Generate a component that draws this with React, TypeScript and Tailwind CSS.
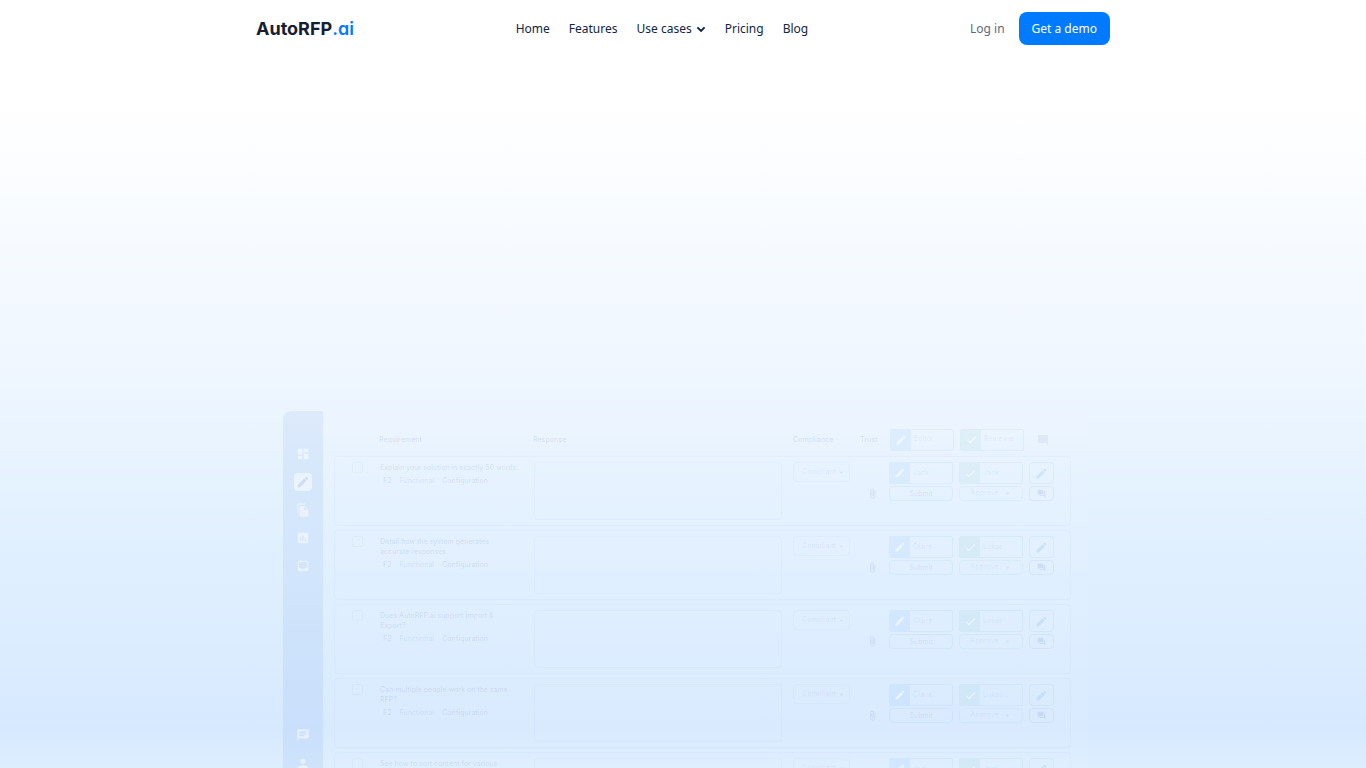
import React from "react";
import {
  MdDashboard,
  MdEdit,
  MdFileCopy,
  MdInsertChart,
  MdInbox,
  MdChat,
  MdPerson,
  MdCheck,
  MdModeComment,
  MdQuestionAnswer,
  MdAttachFile,
  MdArrowDropDown,
} from "react-icons/md";

const columns =
  "grid grid-cols-[28px_154px_minmax(0,1fr)_67px_28px_70px_70px_25px] pl-[17px] pr-4";

const rows = [
  { lines: ["Explain your solution in exactly 50 words."], editor: "Jack", reviewer: "Jack" },
  { lines: ["Detail how the system generates", "accurate responses."], editor: "Claire", reviewer: "Lukas" },
  { lines: ["Does AutoRFP.ai support Import &", "Export?"], editor: "Claire", reviewer: "Lukas" },
  { lines: ["Can multiple people work on the same", "RFP?"], editor: "Claire", reviewer: "Lukas" },
  { lines: ["See how to sort content for various"], editor: "Jack", reviewer: "Jack" },
];

function Header() {
  const link = "hover:text-[#007bff]";
  return (
    <header className="px-4">
      <div className="mx-auto flex h-[57px] w-full max-w-[854px] items-center justify-between">
        <a
          href="#"
          className="font-[Inter,sans-serif] text-[18px] leading-6 font-bold text-[#14202e]"
        >
          AutoRFP
          <span className="font-semibold text-[#007bff] [font-feature-settings:'cv11']">.ai</span>
        </a>
        <nav className="flex items-center gap-[19px] text-[12px] text-[#0f2644]">
          <a href="#" className={link}>Home</a>
          <a href="#" className={link}>Features</a>
          <button type="button" className="flex items-center gap-1">
            Use cases
            <svg viewBox="0 0 10 10" className="size-[10px]" fill="none" stroke="currentColor" strokeWidth="2">
              <path d="M1.4 3.4 5 6.9l3.6-3.5" />
            </svg>
          </button>
          <a href="#" className={link}>Pricing</a>
          <a href="#" className={link}>Blog</a>
        </nav>
        <div className="flex items-center gap-[14px] text-[12px]">
          <a href="#" className="text-[#5d6b82]">Log in</a>
          <a
            href="#"
            className="flex h-[33px] items-center rounded-lg bg-[#007bff] px-[13px] text-white"
          >
            Get a demo
          </a>
        </div>
      </div>
    </header>
  );
}

function Sidebar() {
  return (
    <aside className="flex w-10 shrink-0 flex-col items-center rounded-l-lg bg-[#1d5fc0]/7 pt-[34px] text-white/50">
      <div className="flex flex-col items-center gap-[10px]">
        <button type="button" aria-label="Dashboard" className="flex size-[18px] items-center justify-center">
          <MdDashboard size={14} />
        </button>
        <button
          type="button"
          aria-label="Projects"
          className="flex size-[18px] items-center justify-center rounded-sm bg-white/50 text-[#1d5fc0]/14"
        >
          <MdEdit size={14} />
        </button>
        <button type="button" aria-label="Documents" className="flex size-[18px] items-center justify-center">
          <MdFileCopy size={14} />
        </button>
        <button type="button" aria-label="Reports" className="flex size-[18px] items-center justify-center">
          <MdInsertChart size={14} />
        </button>
        <button type="button" aria-label="Inbox" className="flex size-[18px] items-center justify-center">
          <MdInbox size={14} />
        </button>
      </div>
      <div className="mt-[151px] flex flex-col items-center gap-[11px]">
        <button type="button" aria-label="Chat" className="flex size-[18px] items-center justify-center">
          <MdChat size={14} />
        </button>
        <button type="button" aria-label="Account" className="flex size-[18px] items-center justify-center">
          <MdPerson size={16} />
        </button>
      </div>
    </aside>
  );
}

function Person({ name, kind }: { name: string; kind: "editor" | "reviewer" }) {
  const editor = kind === "editor";
  return (
    <div
      className={
        editor
          ? "flex h-[22px] w-16 overflow-hidden rounded-xs border border-[#007bff]/6"
          : "flex h-[22px] w-16 overflow-hidden rounded-xs border border-[#0f9f7a]/6"
      }
    >
      <span
        className={
          editor
            ? "flex w-5 items-center justify-center bg-[#007bff]/6 text-white/60"
            : "flex w-5 items-center justify-center bg-[#10a36a]/5 text-white/60"
        }
      >
        {editor ? <MdEdit size={12} /> : <MdCheck size={13} />}
      </span>
      <span className="flex items-center pl-[3px] text-[#1e3a5f]/7">{name}</span>
    </div>
  );
}

function Row({ row }: { row: (typeof rows)[number] }) {
  return (
    <tr className={`${columns} mb-1 h-[70px] rounded-sm border border-[#3b6fb0]/3 pt-[5px]`}>
      <td>
        <input
          type="checkbox"
          aria-label={`Select: ${row.lines.join(" ")}`}
          className="block size-[11px] appearance-none rounded-xs border border-[#3b6fb0]/4"
        />
      </td>
      <td className="pt-px leading-[10px] whitespace-nowrap text-[#1e3a5f]/11">
        {row.lines.map((line) => (
          <div key={line}>{line}</div>
        ))}
        <div className="mt-[3px] flex gap-2 pl-[3px]">
          <span>F2</span>
          <span className="text-[#2f7fd8]/12">Functional</span>
          <span>Configuration</span>
        </div>
      </td>
      <td className="pr-3">
        <textarea
          aria-label="Response"
          className="block h-[58px] w-full resize-none rounded-sm border border-[#3b6fb0]/3"
        />
      </td>
      <td>
        <button
          type="button"
          className="-ml-px flex h-5 w-[57px] items-center justify-between rounded-sm border border-[#3b6fb0]/3 pr-[3px] pl-2 text-[#1e3a5f]/7"
        >
          Compliant
          <MdArrowDropDown size={9} />
        </button>
      </td>
      <td className="pt-[26px] pl-[6px] text-[#1e3a5f]/11">
        <MdAttachFile size={11} />
      </td>
      <td className="flex flex-col gap-0.5">
        <Person name={row.editor} kind="editor" />
        <button
          type="button"
          className="h-[15px] w-16 rounded-sm border border-[#007bff]/6 leading-[10px] text-[#2f7fd8]/12"
        >
          Submit
        </button>
      </td>
      <td className="flex flex-col gap-0.5">
        <Person name={row.reviewer} kind="reviewer" />
        <button
          type="button"
          className="flex h-[15px] w-16 items-center justify-center gap-1 rounded-sm border border-[#0f9f7a]/5 text-[#1e6a6f]/8"
        >
          Approve
          <MdArrowDropDown size={9} />
        </button>
      </td>
      <td className="flex flex-col gap-0.5">
        <button
          type="button"
          aria-label="Edit"
          className="flex h-[22px] w-[25px] items-center justify-center rounded-sm border border-[#007bff]/6 text-[#2378d0]/12"
        >
          <MdEdit size={13} />
        </button>
        <button
          type="button"
          aria-label="Comments"
          className="flex h-[15px] w-[25px] items-center justify-center rounded-sm border border-[#1e4a8f]/6 text-[#1e3a8f]/10"
        >
          <MdQuestionAnswer size={9} />
        </button>
      </td>
    </tr>
  );
}

function ProductPreview() {
  return (
    <section className="mx-auto mt-[347px] w-full max-w-[814px] py-[7px] pr-0.5 pl-[7px]">
      <div className="flex rounded-lg">
        <Sidebar />
        <div className="min-w-0 flex-1 rounded-r-lg bg-white/6 pr-[17px] pl-[11px]">
          <table className="block font-[Inter,sans-serif] text-[7px] font-medium">
            <thead className="block">
              <tr className={`${columns} h-[45px] items-center pt-3 text-left text-[#1e3a5f]/11`}>
                <th />
                <th className="pt-0.5 font-semibold">Requirement</th>
                <th className="pt-0.5 font-semibold">Response</th>
                <th className="-ml-0.5 pt-0.5 font-semibold">Compliance</th>
                <th className="-ml-0.5 pt-0.5 font-semibold">Trust</th>
                <th className="font-medium"><Person name="Editor" kind="editor" /></th>
                <th className="font-medium"><Person name="Reviewer" kind="reviewer" /></th>
                <th className="flex justify-center text-[#3b2f8f]/6">
                  <MdModeComment size={12} />
                </th>
              </tr>
            </thead>
            <tbody className="block">
              {rows.map((row) => (
                <Row key={row.lines[0]} row={row} />
              ))}
            </tbody>
          </table>
        </div>
      </div>
    </section>
  );
}

export default function App() {
  return (
    <main className="h-screen overflow-hidden bg-[linear-gradient(180deg,#ffffff_0%,#ffffff_13%,#eef6ff_50%,#e5f2ff_63%,#dcedff_82%,#d7e9ff_95%,#ddeeff_100%)] font-['Noto_Sans',sans-serif]">
      <Header />
      <ProductPreview />
    </main>
  );
}
